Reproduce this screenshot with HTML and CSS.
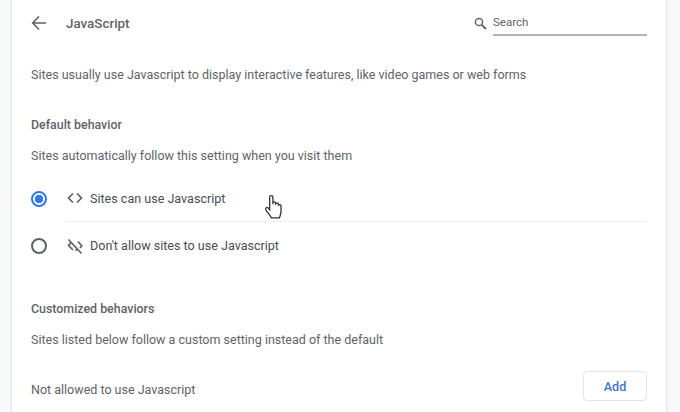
FILE: index.html
```html
<!DOCTYPE html>
<html>
<head>
<title>JavaScript</title>
<link rel="stylesheet" href="styles.css">
</head>
<body>
<div class="card">
    <div class="header">
        <svg class="back" width="16" height="16" viewBox="0 0 16 16"><path d="M15 8H2M8 1.5 1.7 8 8 14.5" fill="none" stroke="#5f6368" stroke-width="1.6"/></svg>
        <h1>JavaScript</h1>
        <div class="search">
            <svg width="13" height="13" viewBox="0 0 13 13"><circle cx="5" cy="5" r="3.6" fill="none" stroke="#5f6368" stroke-width="1.5"/><path d="M7.8 7.8 12 12" stroke="#5f6368" stroke-width="1.8"/></svg>
            <span class="search-box">Search</span>
        </div>
    </div>

    <p class="desc">Sites usually use Javascript to display interactive features, like video games or web forms</p>

    <h2 class="section-first">Default behavior</h2>
    <p class="sub">Sites automatically follow this setting when you visit them</p>

    <div class="radio-row row-first">
        <span class="radio checked"></span>
        <div class="row-label divided">
            <svg class="row-icon" width="18" height="18" viewBox="0 0 18 18"><path d="M7 4.500 2.500 9 7 13.500M11 4.500 15.500 9 11 13.500" fill="none" stroke="#5f6368" stroke-width="1.700"/></svg>
            <span>Sites can use Javascript</span>
        </div>
    </div>
    <div class="radio-row">
        <span class="radio"></span>
        <div class="row-label">
            <svg class="row-icon" width="18" height="18" viewBox="0 0 18 18"><path d="M5.500 5 2.500 8.500 7 13M12 4.500 15.800 9 14 11M2.500 2.500 15.500 16.500M9.500 12.500l1.500 1" fill="none" stroke="#5f6368" stroke-width="1.700"/></svg>
            <span>Don't allow sites to use Javascript</span>
        </div>
    </div>

    <h2 class="section-second">Customized behaviors</h2>
    <p class="sub">Sites listed below follow a custom setting instead of the default</p>

    <div class="list-head">
        <span class="list-title">Not allowed to use Javascript</span>
        <button>Add</button>
    </div>

    <svg class="cursor" width="20" height="26" viewBox="0 0 18 24"><path d="M5 13V3.200C5 1 8 1 8 3.200V9.500V8.500C8 6.800 10.500 6.800 10.500 8.500V10V9.200C10.500 7.800 13 7.800 13 9.200V10.800C13 9.600 15.500 9.600 15.500 11V16C15.500 19 14.500 20 14 22H6.500C5.500 19.500 3 17.500 1.500 14.500 .8 13 2.500 11.500 3.800 13L5 14.500Z" fill="#fff" stroke="#333" stroke-width="1.200"/></svg>
</div>
</body>
</html>
```

FILE: styles.css
```css
html, body {
    margin: 0;
    height: 412px;
    overflow: hidden;
}

body {
    background: #f8f9fa;
    font-family: Roboto, "Liberation Sans", sans-serif;
    font-size: 12.500px;
    color: #5f6368;
}

.card {
    position: relative;
    box-sizing: border-box;
    width: 654px;
    height: 412px;
    margin-left: 12px;
    padding: 0 19px;
    background: #fff;
    box-shadow: 0 0 0 1px #e3e5e8, 0 1px 3px #dfe1e5;
}

.header {
    display: flex;
    align-items: center;
    height: 46px;
}

.back {
    margin-right: 19px;
}

h1 {
    margin: 0;
    font-size: 13.400px;
    font-weight: 500;
}

.search {
    display: flex;
    align-items: center;
    margin-left: auto;
    gap: 6px;
}

.search-box {
    display: block;
    box-sizing: border-box;
    width: 154px;
    height: 26px;
    padding-top: 2px;
    line-height: 20px;
    font-size: 11.500px;
    border-bottom: 2px solid #b0b2b5;
}

p, h2 {
    margin: 0;
    line-height: 20px;
}

.desc {
    margin-top: 19px;
}

h2 {
    font-size: 12.400px;
    font-weight: 500;
}

.section-first {
    margin-top: 30px;
}

.section-second {
    margin-top: 30px;
}

.sub {
    margin-top: 11px;
}

.radio-row {
    display: flex;
    align-items: center;
    height: 47px;
    font-size: 12.560px;
    color: #4a4d52;
}

.row-first {
    margin-top: 9px;
}

.radio {
    box-sizing: border-box;
    width: 16px;
    height: 16px;
    margin-right: 19px;
    border: 2px solid #5f6368;
    border-radius: 50%;
}

.radio.checked {
    border-color: #2f7ae5;
    background: radial-gradient(circle, #2f7ae5 0 4px, #fff 4.500px);
}

.row-label {
    display: flex;
    flex: 1;
    align-items: center;
    box-sizing: border-box;
    height: 100%;
}

.divided {
    border-bottom: 1px solid #eeeff1;
}

.row-icon {
    margin-right: 6px;
}

.list-head {
    display: flex;
    align-items: center;
    justify-content: space-between;
    margin-top: 21px;
}

.list-title {
    padding-top: 6px;
}

button {
    width: 64px;
    height: 30px;
    background: #fff;
    border: 1px solid #e4e6e9;
    border-radius: 4px;
    color: #3f74c9;
    font-family: inherit;
    font-size: 12.500px;
    font-weight: 500;
}

.cursor {
    position: absolute;
    left: 252px;
    top: 194px;
}
```
